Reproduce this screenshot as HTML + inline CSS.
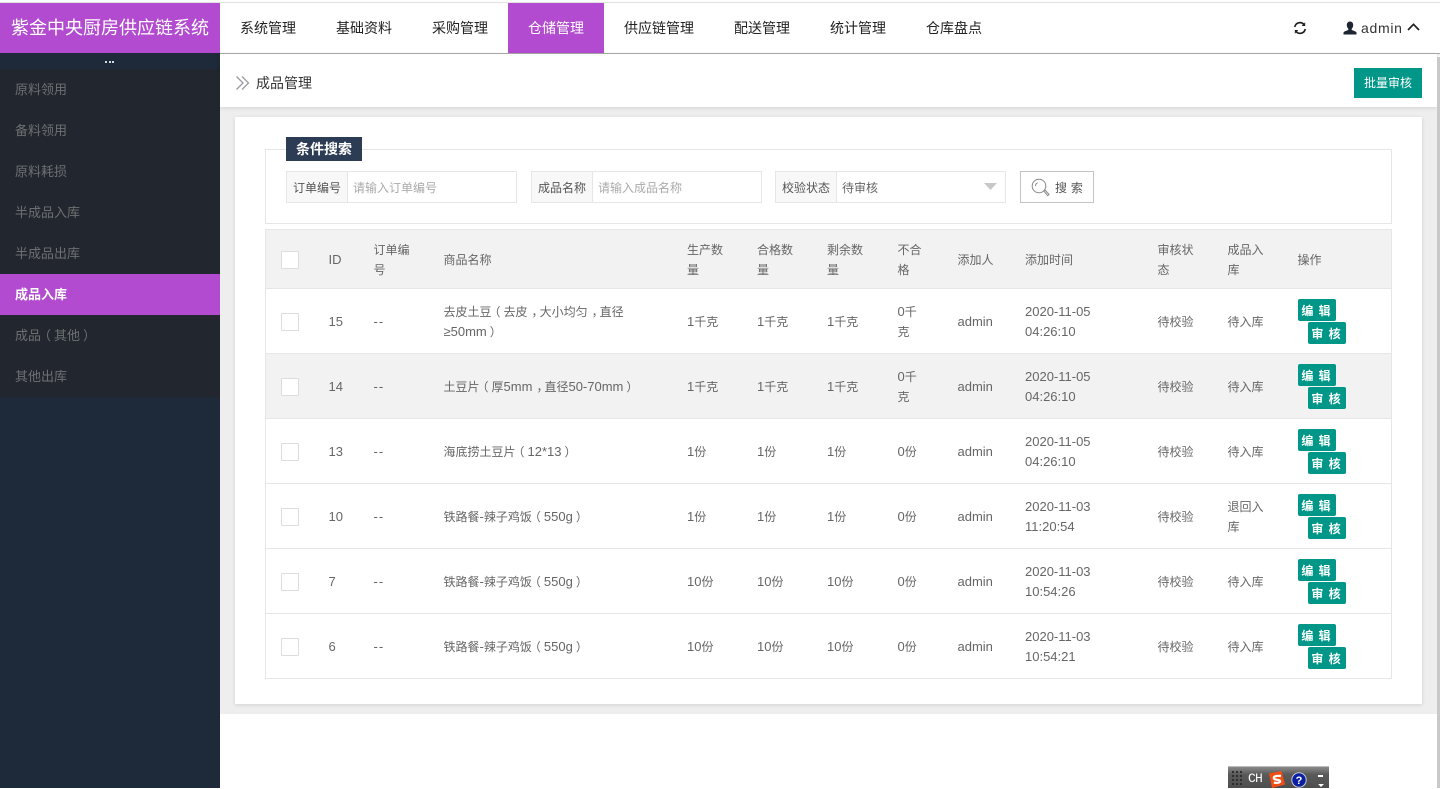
<!DOCTYPE html>
<html lang="zh-CN">
<head>
<meta charset="utf-8">
<title>成品管理</title>
<style>
*{box-sizing:border-box;margin:0;padding:0}
html,body{width:1440px;height:788px;overflow:hidden;background:#fff;font-family:"Liberation Sans","Noto Sans CJK SC",sans-serif;color:#666;font-size:12px}
.a{position:absolute}
#top{left:0;top:2px;width:1440px;height:52px;background:#fff;border-top:1px solid #e2e2e2;border-bottom:1px solid #aaa;box-shadow:0 1px 2px rgba(0,0,0,.12)}
#brand{left:0;top:3px;width:220px;height:50px;background:#b24bcf;color:#fff;font-size:18px;line-height:50px;text-align:center;white-space:nowrap}
.nav{top:3px;height:50px;line-height:50px;font-size:14px;color:#222;text-align:center;white-space:nowrap}
.nav.on{background:#b24bcf;color:#fff}
#side{left:0;top:53px;width:220px;height:735px;background:#1e2a39}
#menu{left:0;top:69px;width:220px;background:#22272f}
#menu div{height:41px;line-height:41px;padding-left:15px;font-size:13px;color:#6d7072;white-space:nowrap}
#menu div.on{background:#b24bcf;color:#fff;font-weight:bold}
#dots{left:105px;top:61px;width:10px;height:2px}
#dots i{float:left;width:2px;height:2px;background:#d5d8dc;margin-right:1.500px}
#gray{left:220px;top:54px;width:1217px;height:660px;background:#eee}
#crumb{left:220px;top:54px;width:1217px;height:53px;background:#fff;box-shadow:0 1px 4px rgba(0,0,0,.12)}
#crumbt{left:256px;top:73px;font-size:14px;line-height:20px;color:#333}
#batch{left:1354px;top:68px;width:68px;height:30px;background:#009688;color:#fff;font-size:12px;line-height:30px;text-align:center}
#card{left:235px;top:117px;width:1187px;height:587px;background:#fff;box-shadow:0 1px 4px rgba(0,0,0,.12)}
#field{left:265px;top:149px;width:1127px;height:75px;border:1px solid #e6e6e6}
#legend{left:286px;top:137px;width:76px;height:24px;background:#2d3c55;color:#fff;font-size:14px;font-weight:bold;line-height:24px;text-align:center}
.grp{top:171px;height:32px;border:1px solid #e6e6e6;background:#fff}
.lab{left:0;top:0;width:61px;height:30px;background:#f8f8f8;border-right:1px solid #e6e6e6;line-height:32px;text-align:center;color:#555;white-space:nowrap}
.ph{left:66px;top:0;line-height:32px;color:#aaa;white-space:nowrap}
#sbtn{left:1020px;top:171px;width:74px;height:32px;border:1px solid #c4c4c4;background:#fff;line-height:30px;color:#555}
#tb{position:absolute;left:265px;top:229px;width:1127px;border-collapse:collapse;table-layout:fixed;border:1px solid #e6e6e6;color:#666;font-size:12px;line-height:20px}
#tb th{font-weight:normal;text-align:left;background:#f2f2f2;height:59px;padding:1px 15px 0;border-bottom:1px solid #e6e6e6;color:#666}
#tb td{height:65px;padding:2px 15px 0;border-bottom:1px solid #e6e6e6;vertical-align:middle;background:#fff}
#tb tr.alt td{background:#f2f2f2}
#tb tr:last-child td{border-bottom:0}
#tb th.s,#tb td.s{padding-left:15.500px}
i.l{font-style:normal;font-size:13px}
.d{letter-spacing:1px}
.lp,.rp,.c{position:relative}
.lp{left:-3px}.rp{left:3px}.c{left:4px}
.cb{display:block;width:18px;height:18px;border:1px solid #ddd;background:#fff;border-radius:1px}
.ops{position:relative;height:45px;width:60px;margin-top:-2px}
.ops b{position:absolute;width:38px;height:22px;background:#009688;color:#fff;font-size:12px;font-weight:bold;line-height:24px;text-align:center;border-radius:2px;white-space:nowrap;letter-spacing:1px}
.ops b:first-child{left:0;top:0}
.ops b:last-child{left:10px;top:23px}
#scroll{left:1437px;top:57px;width:3px;height:731px;background:#c9c9c9}
#ime{left:1228px;top:766px;width:101px;height:22px;background:linear-gradient(#8a8a8a,#5a5a5a 35%,#4e4e4e);border-top:1px solid #bbb}
#ime span{position:absolute;left:20px;top:5px;color:#fff;font:13px/14px "Liberation Mono",monospace;letter-spacing:-.8px}
</style>
</head>
<body>
<div class="a" id="top"></div>
<div class="a" id="brand">紫金中央厨房供应链系统</div>
<div class="a nav" style="left:220px;width:96px">系统管理</div>
<div class="a nav" style="left:316px;width:96px">基础资料</div>
<div class="a nav" style="left:412px;width:96px">采购管理</div>
<div class="a nav on" style="left:508px;width:96px">仓储管理</div>
<div class="a nav" style="left:604px;width:110px">供应链管理</div>
<div class="a nav" style="left:714px;width:96px">配送管理</div>
<div class="a nav" style="left:810px;width:96px">统计管理</div>
<div class="a nav" style="left:906px;width:96px">仓库盘点</div>

<svg class="a" style="left:1293px;top:21px" width="14" height="14" viewBox="0 0 14 14" fill="none" stroke="#222" stroke-width="1.7">
<path d="M1.800 6A5.200 5.200 0 0 1 11 3.600"/><path d="M12.200 8A5.200 5.200 0 0 1 3 10.400"/>
<path d="M12.200 1.200V5H8.600z" fill="#222" stroke="none"/><path d="M1.800 12.800V9h3.600z" fill="#222" stroke="none"/>
</svg>
<svg class="a" style="left:1343px;top:21px" width="14" height="14" viewBox="0 0 14 14" fill="#1c2530">
<path d="M7 0.500c2 0 3.200 1.500 3.200 3.600 0 1.600-.7 3-1.500 3.700v1.200c1.800.7 4.300 1.400 4.800 2.600v1.900H.5v-1.900c.5-1.200 3-1.900 4.800-2.600V7.800C4.500 7.100 3.800 5.700 3.800 4.100 3.800 2 5 .5 7 .5z"/>
</svg>
<div class="a" style="left:1361px;top:18px;font-size:14px;line-height:20px;color:#333;letter-spacing:.7px">admin</div>
<svg class="a" style="left:1407px;top:22px" width="13" height="10" viewBox="0 0 13 10" fill="none" stroke="#222" stroke-width="1.7"><path d="M1 8L6.500 2.300 12 8"/></svg>

<div class="a" id="side"></div>
<div class="a" id="dots"><i></i><i></i><i style="margin-right:0"></i></div>
<div class="a" id="menu">
<div>原料领用</div><div>备料领用</div><div>原料耗损</div><div>半成品入库</div><div>半成品出库</div><div class="on">成品入库</div><div>成品<span class="lp">（</span>其他<span class="rp">）</span></div><div>其他出库</div>
</div>

<div class="a" id="gray"></div>
<div class="a" id="crumb"></div>
<svg class="a" style="left:235px;top:75px" width="16" height="16" viewBox="0 0 16 16" fill="none" stroke="#9a9aa2" stroke-width="1.300"><path d="M1.500 1.500L8 8 1.500 14.500"/><path d="M7 1.500L13.500 8 7 14.500"/></svg>
<div class="a" id="crumbt">成品管理</div>
<div class="a" id="batch">批量审核</div>

<div class="a" id="card"></div>
<div class="a" id="field"></div>
<div class="a" id="legend">条件搜索</div>

<div class="a grp" style="left:286px;width:231px"><div class="a lab">订单编号</div><div class="a ph">请输入订单编号</div></div>
<div class="a grp" style="left:531px;width:231px"><div class="a lab">成品名称</div><div class="a ph">请输入成品名称</div></div>
<div class="a grp" style="left:775px;width:231px"><div class="a lab">校验状态</div><div class="a ph" style="color:#666">待审核</div>
<svg class="a" style="left:208px;top:11px" width="14" height="8" viewBox="0 0 14 8"><path d="M0 0h13L6.500 7z" fill="#c8c8c8"/></svg></div>

<div class="a" id="sbtn">
<svg class="a" style="left:10px;top:6px" width="19" height="19" viewBox="0 0 19 19" fill="none" stroke="#888" stroke-width="1"><circle cx="8" cy="8" r="6.800"/><path d="M4.500 8a3.500 3.500 0 0 1 2-3.200"/><path d="M12.800 13l1.200-1 4 4.500-1.300 1.200z"/></svg>
<span class="a" style="left:34px;top:1px;letter-spacing:.3px;white-space:nowrap">搜 索</span>
</div>

<table id="tb">
<colgroup><col style="width:48px"><col style="width:45px"><col style="width:70px"><col style="width:243px"><col style="width:70px"><col style="width:70px"><col style="width:71px"><col style="width:60px"><col style="width:67px"><col style="width:133px"><col style="width:70px"><col style="width:70px"><col></colgroup>
<tr><th><span class="cb"></span></th><th><i class="l">ID</i></th><th>订单编号</th><th>商品名称</th><th class="s">生产数量</th><th class="s">合格数量</th><th class="s">剩余数量</th><th>不合格</th><th>添加人</th><th class="s">添加时间</th><th>审核状态</th><th>成品入库</th><th>操作</th></tr>
<tr><td><span class="cb"></span></td><td><i class="l">15</i></td><td><i class="l d">--</i></td><td>去皮土豆<span class="lp">（</span>去皮<span class="c">，</span>大小均匀<span class="c">，</span>直径<br><i class="l">≥50mm</i><span class="rp">）</span></td><td class="s"><i class="l">1</i>千克</td><td class="s"><i class="l">1</i>千克</td><td class="s"><i class="l">1</i>千克</td><td><i class="l">0</i>千克</td><td><i class="l">admin</i></td><td class="s"><i class="l">2020-11-05 04:26:10</i></td><td>待校验</td><td>待入库</td><td><div class="ops"><b>编 辑</b><b>审 核</b></div></td></tr>
<tr class="alt"><td><span class="cb"></span></td><td><i class="l">14</i></td><td><i class="l d">--</i></td><td>土豆片<span class="lp">（</span>厚<i class="l">5mm</i><span class="c">，</span>直径<i class="l">50-70mm</i><span class="rp">）</span></td><td class="s"><i class="l">1</i>千克</td><td class="s"><i class="l">1</i>千克</td><td class="s"><i class="l">1</i>千克</td><td><i class="l">0</i>千克</td><td><i class="l">admin</i></td><td class="s"><i class="l">2020-11-05 04:26:10</i></td><td>待校验</td><td>待入库</td><td><div class="ops"><b>编 辑</b><b>审 核</b></div></td></tr>
<tr><td><span class="cb"></span></td><td><i class="l">13</i></td><td><i class="l d">--</i></td><td>海底捞土豆片<span class="lp">（</span><i class="l">12*13</i><span class="rp">）</span></td><td class="s"><i class="l">1</i>份</td><td class="s"><i class="l">1</i>份</td><td class="s"><i class="l">1</i>份</td><td><i class="l">0</i>份</td><td><i class="l">admin</i></td><td class="s"><i class="l">2020-11-05 04:26:10</i></td><td>待校验</td><td>待入库</td><td><div class="ops"><b>编 辑</b><b>审 核</b></div></td></tr>
<tr><td><span class="cb"></span></td><td><i class="l">10</i></td><td><i class="l d">--</i></td><td>铁路餐<i class="l">-</i>辣子鸡饭<span class="lp">（</span><i class="l">550g</i><span class="rp">）</span></td><td class="s"><i class="l">1</i>份</td><td class="s"><i class="l">1</i>份</td><td class="s"><i class="l">1</i>份</td><td><i class="l">0</i>份</td><td><i class="l">admin</i></td><td class="s"><i class="l">2020-11-03 11:20:54</i></td><td>待校验</td><td>退回入库</td><td><div class="ops"><b>编 辑</b><b>审 核</b></div></td></tr>
<tr><td><span class="cb"></span></td><td><i class="l">7</i></td><td><i class="l d">--</i></td><td>铁路餐<i class="l">-</i>辣子鸡饭<span class="lp">（</span><i class="l">550g</i><span class="rp">）</span></td><td class="s"><i class="l">10</i>份</td><td class="s"><i class="l">10</i>份</td><td class="s"><i class="l">10</i>份</td><td><i class="l">0</i>份</td><td><i class="l">admin</i></td><td class="s"><i class="l">2020-11-03 10:54:26</i></td><td>待校验</td><td>待入库</td><td><div class="ops"><b>编 辑</b><b>审 核</b></div></td></tr>
<tr><td><span class="cb"></span></td><td><i class="l">6</i></td><td><i class="l d">--</i></td><td>铁路餐<i class="l">-</i>辣子鸡饭<span class="lp">（</span><i class="l">550g</i><span class="rp">）</span></td><td class="s"><i class="l">10</i>份</td><td class="s"><i class="l">10</i>份</td><td class="s"><i class="l">10</i>份</td><td><i class="l">0</i>份</td><td><i class="l">admin</i></td><td class="s"><i class="l">2020-11-03 10:54:21</i></td><td>待校验</td><td>待入库</td><td><div class="ops"><b>编 辑</b><b>审 核</b></div></td></tr>
</table>

<div class="a" id="scroll"></div>

<div class="a" id="ime">
<svg class="a" style="left:4px;top:4px" width="12" height="18" viewBox="0 0 12 18" fill="#2e2e2e"><path d="M0 0h2v2H0zM4 0h2v2H4zM8 0h2v2H8zM0 4h2v2H0zM4 4h2v2H4zM8 4h2v2H8zM0 8h2v2H0zM4 8h2v2H4zM8 8h2v2H8zM0 12h2v2H0zM4 12h2v2H4zM8 12h2v2H8z"/></svg>
<span>CH</span>
<svg class="a" style="left:41px;top:4px" width="16" height="17" viewBox="0 0 16 17"><path d="M0 2.500L12.500 0 16 13.500 3 17z" fill="#f04e14"/><path d="M12 5C8.500 4.500 4.500 5 4.800 7.200c.3 2.300 6.200 1 6.400 3 .1 1.500-3 2-6.400 1.500" fill="none" stroke="#fff" stroke-width="2.200"/></svg>
<svg class="a" style="left:63px;top:5px" width="16" height="16" viewBox="0 0 16 16"><circle cx="8" cy="8" r="7.200" fill="#0b1fa0" stroke="#c8c8d0"/><text x="8" y="12" text-anchor="middle" font-size="11" font-weight="bold" fill="#fff" font-family="Liberation Sans">?</text></svg>
<svg class="a" style="left:89px;top:6px" width="8" height="15" viewBox="0 0 8 15" fill="#fff"><path d="M1 2h5v2H1zM1 11h6l-3 3z"/></svg>
</div>
</body>
</html>
